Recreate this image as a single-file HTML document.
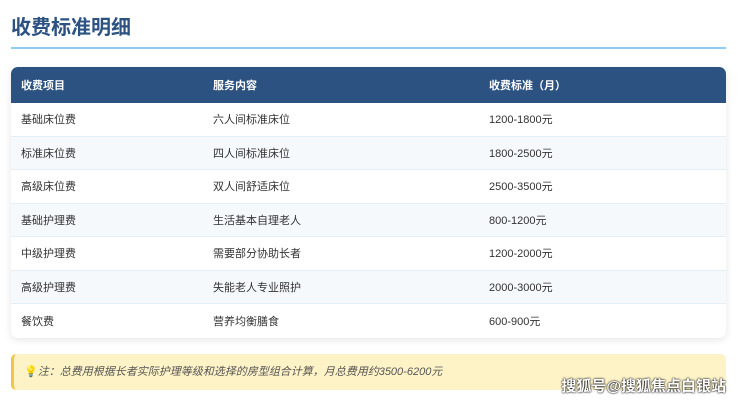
<!DOCTYPE html>
<html><head><meta charset="utf-8"><style>
body{margin:0;width:740px;height:402px;background:#fff;font-family:"Liberation Sans","Noto Sans CJK SC",sans-serif;position:relative;overflow:hidden}
h1{position:absolute;left:11px;top:13px;margin:0;font-size:20px;font-weight:bold;color:#2c5282;line-height:30px}
.line{position:absolute;left:11px;top:47px;width:715px;height:2px;background:#90cdf4}
.tbl{position:absolute;left:11px;top:67px;width:715px;border-radius:7px;overflow:hidden;box-shadow:0 2px 8px rgba(0,0,0,.1)}
.r{display:flex;height:33.5px;align-items:center;font-size:11px;color:#333;border-bottom:1px solid #e6eef5;box-sizing:border-box}
.r.h{background:#2c5282;color:#fff;font-weight:bold;height:36px;border:none}
.c1{width:192px;padding-left:10px;box-sizing:border-box}.c2{width:276px;padding-left:10px;box-sizing:border-box}.c3{padding-left:10px}
.note{position:absolute;left:11px;top:354px;width:715px;height:36px;background:#fef3c7;border-left:3px solid #f6c344;border-radius:5px;box-sizing:border-box;font-size:11px;font-style:italic;color:#555;line-height:36px;padding-left:10px}
.wm{position:absolute;right:14px;top:375px;font-size:15px;font-weight:bold;color:#fff;text-shadow:0 0 2px #000,0 0 1px #000}
</style></head><body>
<h1>收费标准明细</h1><div class="line"></div>
<div class="tbl">
<div class="r h"><div class="c1">收费项目</div><div class="c2">服务内容</div><div class="c3">收费标准（月）</div></div>
<div class="r" style="background:#fff"><div class="c1">基础床位费</div><div class="c2">六人间标准床位</div><div class="c3">1200-1800元</div></div>
<div class="r" style="background:#f5f9fc"><div class="c1">标准床位费</div><div class="c2">四人间标准床位</div><div class="c3">1800-2500元</div></div>
<div class="r" style="background:#fff"><div class="c1">高级床位费</div><div class="c2">双人间舒适床位</div><div class="c3">2500-3500元</div></div>
<div class="r" style="background:#f5f9fc"><div class="c1">基础护理费</div><div class="c2">生活基本自理老人</div><div class="c3">800-1200元</div></div>
<div class="r" style="background:#fff"><div class="c1">中级护理费</div><div class="c2">需要部分协助长者</div><div class="c3">1200-2000元</div></div>
<div class="r" style="background:#f5f9fc"><div class="c1">高级护理费</div><div class="c2">失能老人专业照护</div><div class="c3">2000-3000元</div></div>
<div class="r" style="background:#fff;border:none"><div class="c1">餐饮费</div><div class="c2">营养均衡膳食</div><div class="c3">600-900元</div></div>
</div>
<div class="note"><span style="color:#d69e2e;font-style:normal">💡</span>注：总费用根据长者实际护理等级和选择的房型组合计算，月总费用约3500-6200元</div>
<div class="wm">搜狐号@搜狐焦点白银站</div>
</body></html>
